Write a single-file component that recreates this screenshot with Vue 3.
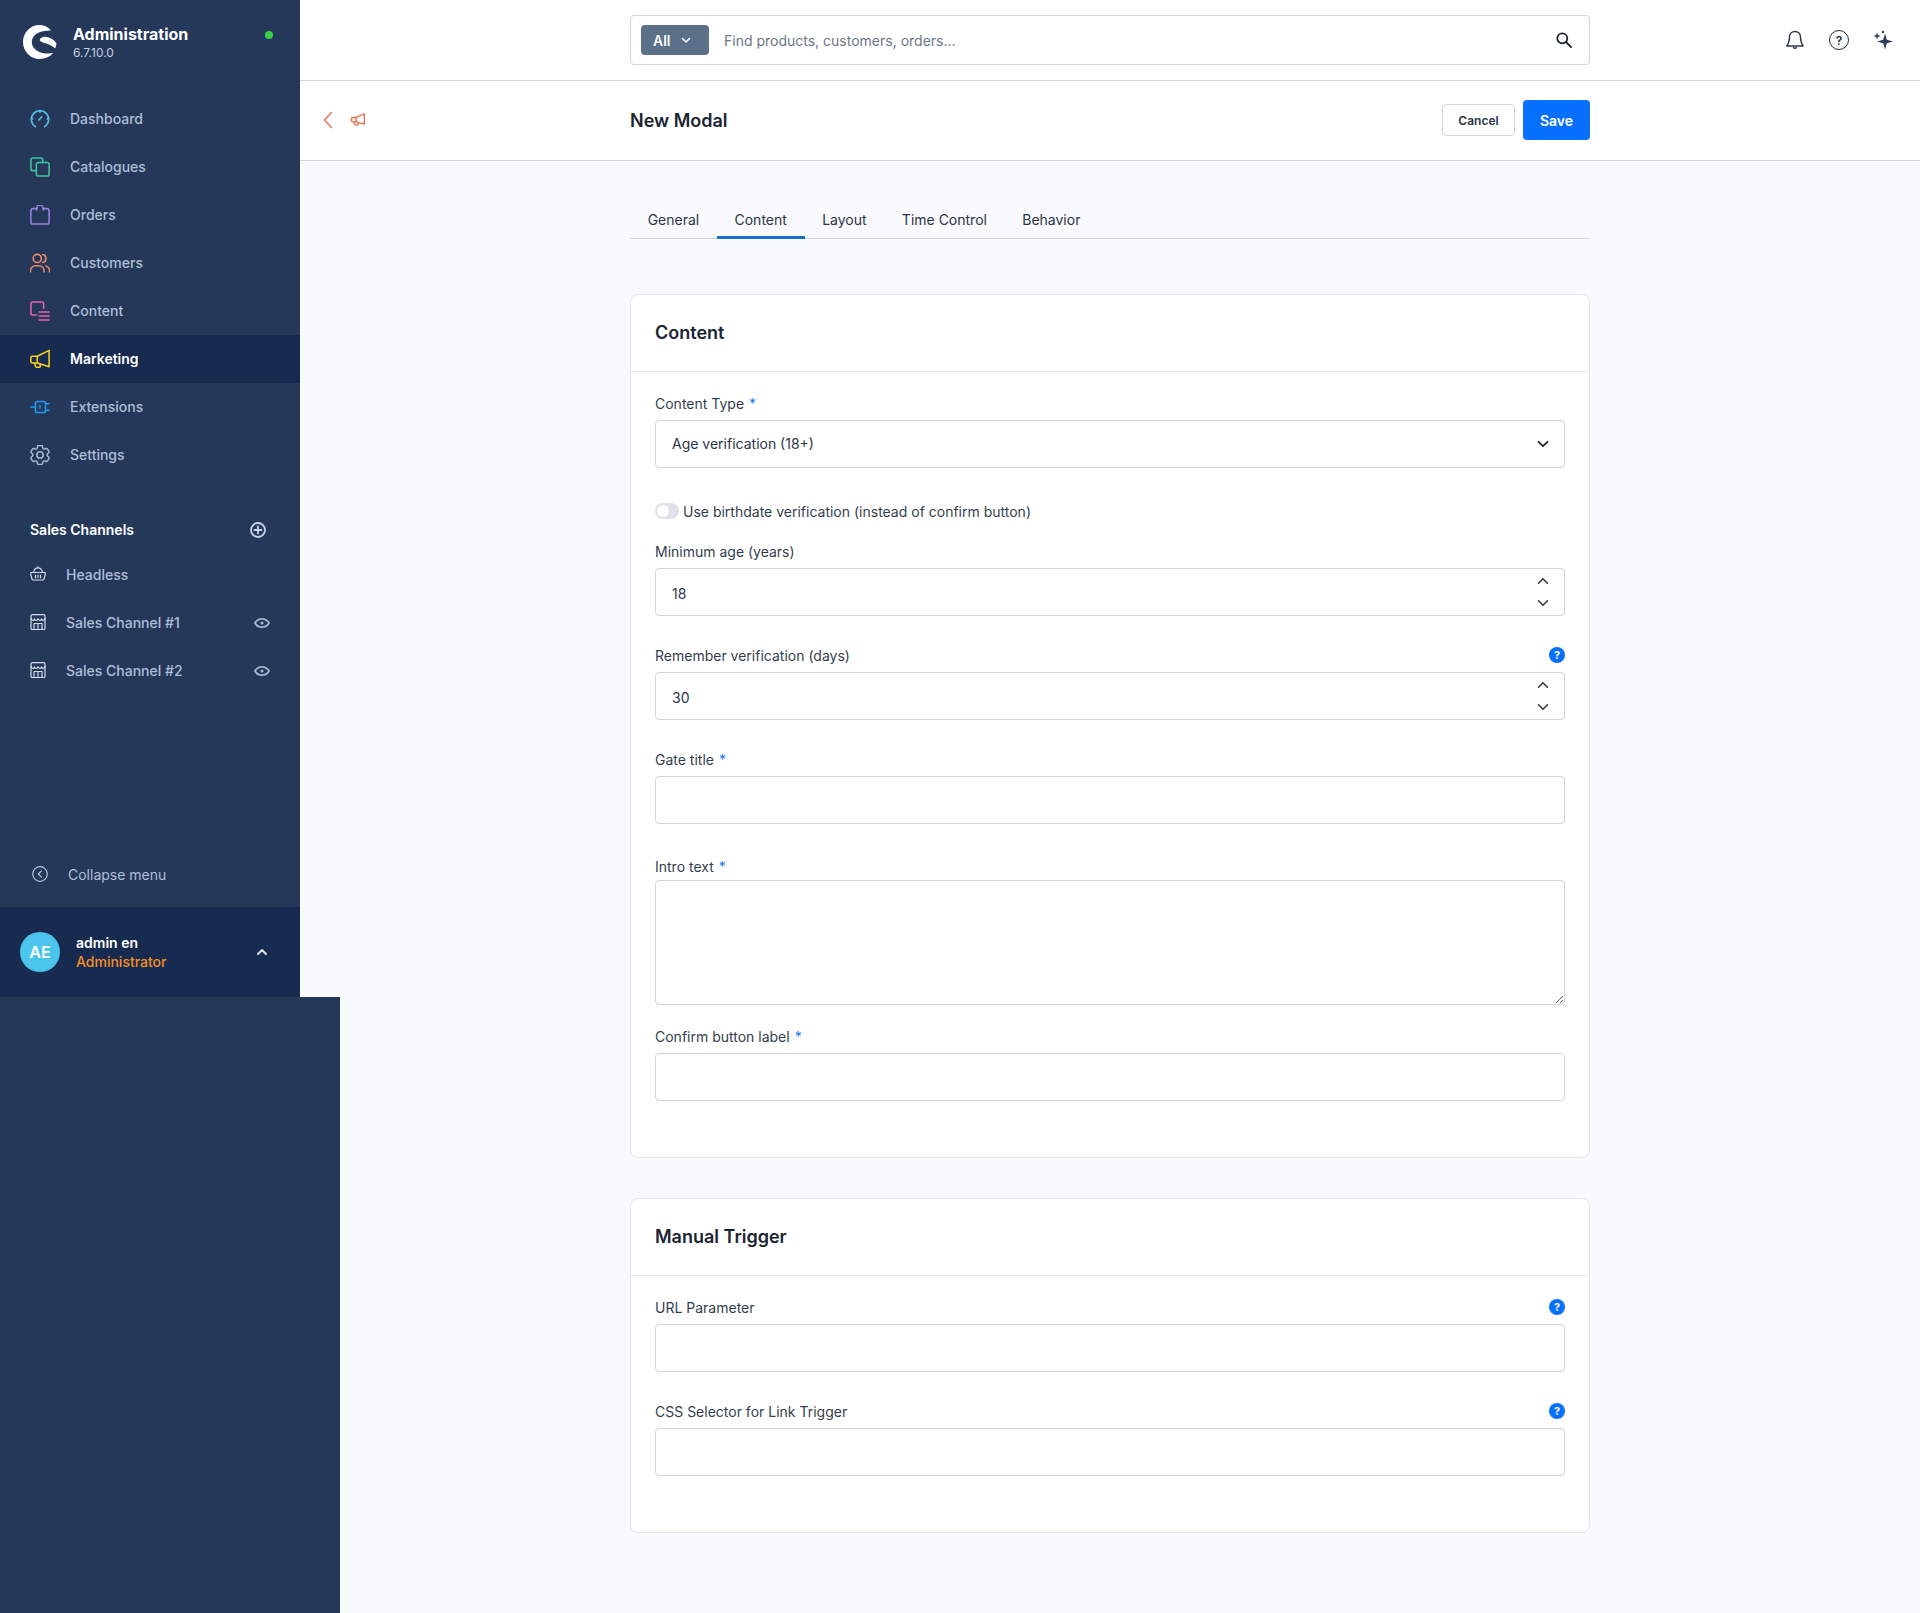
<script setup>
import { ref } from 'vue';

const tabs = ['General', 'Content', 'Layout', 'Time Control', 'Behavior'];
const activeTab = ref('Content');

const navItems = [
  { name: 'Dashboard', color: '#57c4e5', paths: ['M7 20.500A9.500 9.500 0 1 1 17 20.500', 'M2.500 12h1.500M20 12h1.500M12 2.500V4.500', 'M10.800 13.200l3.200-3.600'] },
  { name: 'Catalogues', color: '#3fc59b', paths: ['M8 16H4a2 2 0 0 1-2-2V4a2 2 0 0 1 2-2h9a2 2 0 0 1 2 2v3', 'M10 7h10a2 2 0 0 1 2 2v11a2 2 0 0 1-2 2H10a2 2 0 0 1-2-2V9a2 2 0 0 1 2-2z'] },
  { name: 'Orders', color: '#8e85de', paths: ['M8.500 5H4a2 2 0 0 0-2 2V20a2 2 0 0 0 2 2h16a2 2 0 0 0 2-2V7a2 2 0 0 0-2-2h-4.500', 'M8.500 6.500V4.500a3.500 3.500 0 0 1 7 0V6.500'] },
  { name: 'Customers', color: '#ec8a68', paths: ['M9 11.500a4.500 4.500 0 1 0 0-9 4.500 4.500 0 0 0 0 9z', 'M1.500 22v-1.500a5.500 5.500 0 0 1 5.500-5.500h4a5.500 5.500 0 0 1 5.500 5.500V22', 'M15 2.600a4.500 4.500 0 0 1 0 8.800', 'M18.500 15.300a5.500 5.500 0 0 1 4 5.200V22'] },
  { name: 'Content', color: '#e363ad', paths: ['M8 16.500H4a2 2 0 0 1-2-2V4a2 2 0 0 1 2-2h10a2 2 0 0 1 2 2v5', 'M11 13h11M11 17.500h11M11 22h11'] },
  { name: 'Marketing', color: '#f5d21f', active: true, paths: ['M22 2.500v18L9 16.500H3.500a1.500 1.500 0 0 1-1.500-1.500v-4.500a1.500 1.500 0 0 1 1.500-1.500H9z', 'M9 9v7.500', 'M6 16.500l1 3.500a1.500 1.500 0 0 0 1.500 1h2.500a1.500 1.500 0 0 0 1.400-1.800l-.4-1.500'] },
  { name: 'Extensions', color: '#1e9bf0', paths: ['M9 6h7a2 2 0 0 1 2 2v8a2 2 0 0 1-2 2H9a2 2 0 0 1-2-2V8a2 2 0 0 1 2-2z', 'M1 12h6M18 8.500h4M18 15.500h4', 'M12 10.500v3'] },
  { name: 'Settings', color: '#a6b6cd', gear: true, paths: [] },
];

const channels = [
  { name: 'Headless', icon: 'basket', eye: false },
  { name: 'Sales Channel #1', icon: 'store', eye: true },
  { name: 'Sales Channel #2', icon: 'store', eye: true },
];

const gearPath = 'M9.594 3.94c.09-.542.56-.94 1.11-.94h2.593c.55 0 1.02.398 1.11.94l.213 1.281c.063.374.313.686.645.87.074.04.147.083.22.127.324.196.72.257 1.075.124l1.217-.456a1.125 1.125 0 011.37.49l1.296 2.247a1.125 1.125 0 01-.26 1.431l-1.003.827c-.293.24-.438.613-.431.992a6.759 6.759 0 010 .255c-.007.378.138.75.43.99l1.005.828c.424.35.534.954.26 1.43l-1.298 2.247a1.125 1.125 0 01-1.369.491l-1.217-.456c-.355-.133-.75-.072-1.076.124a6.57 6.57 0 01-.22.128c-.331.183-.581.495-.644.869l-.213 1.28c-.09.543-.56.941-1.11.941h-2.594c-.55 0-1.02-.398-1.11-.94l-.213-1.281c-.062-.374-.312-.686-.644-.87a6.52 6.52 0 01-.22-.127c-.325-.196-.72-.257-1.076-.124l-1.217.456a1.125 1.125 0 01-1.369-.49l-1.297-2.247a1.125 1.125 0 01.26-1.431l1.004-.827c.292-.24.437-.613.43-.992a6.932 6.932 0 010-.255c.007-.378-.138-.75-.43-.99l-1.004-.828a1.125 1.125 0 01-.26-1.43l1.297-2.247a1.125 1.125 0 011.37-.491l1.216.456c.356.133.751.072 1.076-.124.072-.044.146-.087.22-.128.332-.183.582-.495.644-.869l.214-1.281z';
</script>

<template>
  <div class="app">
    <aside class="sidebar">
      <header class="brand">
        <svg class="logo" viewBox="0 0 34 34">
          <path fill="#fff" d="M28 5.200C24.800 1.800 20.800 0 16.500 0 7.300 0 0 7.600 0 17c0 9.500 7.500 17 16.800 17 5.400 0 10.500-2.300 13.300-5.900-3.500.500-8.800.7-13.200-.9C12 25.500 8.800 21.600 8.800 17.100c0-6 5.800-10.100 12.500-11 2.500-.3 4.700-.5 6.700-.9z" />
          <path fill="#fff" d="M17.600 13.200c-.9.800-1.100 2-.3 2.900 1.900 1.900 6.300 2.300 9.500 3.800 2.200 1 4.100 2.200 5.300 3.500.8-1.700 1.300-3.700 1.300-5.500-2.800-3.500-7.400-6-11.400-6.200-1.800 0-3.300.7-4.400 1.500z" />
        </svg>
        <div class="brand-text">
          <strong>Administration</strong>
          <span>6.7.10.0</span>
        </div>
        <i class="status-dot"></i>
      </header>

      <nav class="main-nav">
        <a v-for="item in navItems" :key="item.name" class="nav-item" :class="{ active: item.active }">
          <svg class="nav-icon" :viewBox="item.gear ? '2.500 2.500 19 19' : '1 1 22 22'" fill="none" :stroke="item.color" :stroke-width="item.gear ? 1.400 : 1.700" stroke-linecap="round" stroke-linejoin="round">
            <template v-if="item.gear">
              <path :d="gearPath" />
              <circle cx="12" cy="12" r="3" />
            </template>
            <path v-for="(d, i) in item.paths" :key="i" :d="d" />
          </svg>
          <span>{{ item.name }}</span>
        </a>
      </nav>

      <section class="channels">
        <div class="channels-head">
          <span>Sales Channels</span>
          <svg width="16" height="16" viewBox="0 0 16 16" fill="none" stroke="#c9d5e6" stroke-width="1.800" stroke-linecap="round">
            <circle cx="8" cy="8" r="7" />
            <path d="M8 4.500v7M4.500 8h7" />
          </svg>
        </div>
        <a v-for="channel in channels" :key="channel.name" class="channel">
          <svg v-if="channel.icon === 'basket'" class="channel-icon" viewBox="0 0 16 16" fill="none" stroke="#d3dde9" stroke-width="1.200" stroke-linejoin="round" stroke-linecap="round">
            <path d="M.8 6.500h14.400v1.500a6 6 0 0 1-.3 1.800l-.9 3.200a1.200 1.200 0 0 1-1.200 1H3.200a1.200 1.200 0 0 1-1.200-1l-.9-3.200A6 6 0 0 1 .8 8z" />
            <path d="M3.500 6.500C4 3.500 6 1.800 8 1.800s4 1.700 4.500 4.700M8 .8v1M5.500 9.200v2.500M8 9.200v2.500M10.500 9.200v2.500" />
          </svg>
          <svg v-else class="channel-icon" viewBox="0 0 16 16" fill="none" stroke="#d3dde9" stroke-width="1.200" stroke-linejoin="round" stroke-linecap="round">
            <path d="M2.500.7h11a1.500 1.500 0 0 1 1.500 1.500v12a1.500 1.500 0 0 1-1.500 1.500h-11A1.500 1.500 0 0 1 1 14.200v-12A1.500 1.500 0 0 1 2.500.7z" />
            <path d="M1 4.500c1 2.500 3 2.500 3.500.3.600 2.200 2.500 2.200 3.500 0 1 2.200 2.900 2.200 3.500 0C12 7 14 7 15 4.500" />
            <path d="M4 15.500V9.500h8v6M8 9.500v6" />
          </svg>
          <span>{{ channel.name }}</span>
          <svg v-if="channel.eye" class="eye" width="16" height="16" viewBox="0 0 16 16" fill="none" stroke="#a6b6cd" stroke-width="1.800">
            <path d="M1 8C2.600 5.200 5 3.800 8 3.800s5.400 1.400 7 4.200c-1.600 2.800-4 4.200-7 4.200S2.600 10.800 1 8z" />
            <circle cx="8" cy="8" r="1.600" fill="#a6b6cd" stroke="none" />
          </svg>
        </a>
      </section>

      <a class="collapse">
        <svg width="16" height="16" viewBox="0 0 16 16" fill="none" stroke="#b3c2d8" stroke-width="1.200" stroke-linecap="round" stroke-linejoin="round">
          <circle cx="8" cy="8" r="7.300" />
          <path d="M9.500 4.800L6.300 8l3.200 3.200" />
        </svg>
        <span>Collapse menu</span>
      </a>

      <footer class="user">
        <div class="avatar">AE</div>
        <div class="user-text">
          <strong>admin en</strong>
          <span>Administrator</span>
        </div>
        <svg width="12" height="12" viewBox="0 0 12 12" fill="none" stroke="#dfe6f0" stroke-width="2" stroke-linecap="round" stroke-linejoin="round">
          <path d="M2 8l4-4 4 4" />
        </svg>
      </footer>
    </aside>

    <div class="sidebar-rest"></div>

    <main class="main">
      <div class="topbar">
        <div class="search">
          <button class="search-type">
            All
            <svg width="10" height="10" viewBox="0 0 10 10" fill="none" stroke="#fff" stroke-width="1.600" stroke-linecap="round" stroke-linejoin="round">
              <path d="M1.500 3.500L5 7l3.500-3.500" />
            </svg>
          </button>
          <input type="text" placeholder="Find products, customers, orders..." />
          <svg width="16" height="16" viewBox="0 0 16 16" fill="none" stroke="#1a2432" stroke-width="1.800" stroke-linecap="round">
            <circle cx="6.300" cy="6.300" r="5" />
            <path d="M10 10l5 5" />
          </svg>
        </div>
        <div class="top-icons">
          <svg width="20" height="20" viewBox="0 0 20 20" fill="none" stroke="#303b4a" stroke-width="1.400" stroke-linejoin="round" stroke-linecap="round">
            <path d="M10 1.500c-3.200 0-5.500 2.400-5.500 5.500 0 4.500-.5 6.200-2.700 9h16.400c-2.200-2.800-2.700-4.500-2.700-9 0-3.100-2.300-5.500-5.500-5.500z" />
            <path d="M8.500 17.300a1.600 1.600 0 0 0 3 0" />
          </svg>
          <span class="help-round">?</span>
          <svg width="20" height="20" viewBox="0 0 20 20" fill="#2c3d58">
            <path d="M12 3.500l1.800 6.200 6.200 1.800-6.200 1.800-1.800 6.200-1.800-6.200-6.200-1.800 6.200-1.800z" />
            <path d="M4 2.500l.9 2.600 2.600.9-2.600.9L4 9.500l-.9-2.600L.5 6l2.600-.9z" />
            <circle cx="10" cy="2" r="1.200" />
          </svg>
        </div>
      </div>

      <div class="smartbar">
        <div class="crumbs">
          <svg width="10" height="18" viewBox="0 0 10 18" fill="none" stroke="#e96f4a" stroke-width="1.500" stroke-linecap="round" stroke-linejoin="round">
            <path d="M8.500 1.500L1.500 9l7 7.500" />
          </svg>
          <svg width="18" height="14" viewBox="0 0 24 22" fill="none" stroke="#e96f4a" stroke-width="2.200" stroke-linecap="round" stroke-linejoin="round">
            <path d="M22 1.500v16l-13-3.500H3.500A1.500 1.500 0 0 1 2 12.500v-4A1.500 1.500 0 0 1 3.500 7H9zM9 7v7M6 14l1 4a1.500 1.500 0 0 0 1.500 1h2.500a1.500 1.500 0 0 0 1.400-2l-.4-1.500" />
          </svg>
        </div>
        <div class="smartbar-inner">
          <h1>New Modal</h1>
          <div class="actions">
            <button class="btn-cancel">Cancel</button>
            <button class="btn-save">Save</button>
          </div>
        </div>
      </div>

      <div class="page">
        <div class="tabs">
          <a v-for="tab in tabs" :key="tab" class="tab" :class="{ active: tab === activeTab }" @click="activeTab = tab">{{ tab }}</a>
        </div>

        <section class="card first">
          <h2>Content</h2>
          <div class="card-body">
            <div class="field">
              <label>Content Type <em>*</em></label>
              <div class="control">
                <select>
                  <option>Age verification (18+)</option>
                </select>
                <svg class="select-arrow" width="12" height="12" viewBox="0 0 12 12" fill="none" stroke="#1e2a38" stroke-width="1.800" stroke-linecap="round" stroke-linejoin="round">
                  <path d="M1.500 3.800L6 8.200l4.500-4.400" />
                </svg>
              </div>
            </div>

            <div class="toggle-row">
              <span class="toggle"><i></i></span>
              <span>Use birthdate verification (instead of confirm button)</span>
            </div>

            <div class="field">
              <label>Minimum age (years)</label>
              <div class="control">
                <input type="number" value="18" />
                <div class="stepper">
                  <svg width="12" height="12" viewBox="0 0 12 12"><path d="M1.500 8.200L6 3.800l4.500 4.400" /></svg>
                  <svg width="12" height="12" viewBox="0 0 12 12"><path d="M1.500 3.800L6 8.200l4.500-4.400" /></svg>
                </div>
              </div>
            </div>

            <div class="field">
              <label>Remember verification (days) <b class="help">?</b></label>
              <div class="control">
                <input type="number" value="30" />
                <div class="stepper">
                  <svg width="12" height="12" viewBox="0 0 12 12"><path d="M1.500 8.200L6 3.800l4.500 4.400" /></svg>
                  <svg width="12" height="12" viewBox="0 0 12 12"><path d="M1.500 3.800L6 8.200l4.500-4.400" /></svg>
                </div>
              </div>
            </div>

            <div class="field before-text">
              <label>Gate title <em>*</em></label>
              <input type="text" />
            </div>

            <div class="field text-field">
              <label>Intro text <em>*</em></label>
              <textarea></textarea>
            </div>

            <div class="field">
              <label>Confirm button label <em>*</em></label>
              <input type="text" />
            </div>
          </div>
        </section>

        <section class="card">
          <h2>Manual Trigger</h2>
          <div class="card-body">
            <div class="field">
              <label>URL Parameter <b class="help">?</b></label>
              <input type="text" />
            </div>
            <div class="field">
              <label>CSS Selector for Link Trigger <b class="help">?</b></label>
              <input type="text" />
            </div>
          </div>
        </section>
      </div>
    </main>
  </div>
</template>

<style>
body {
  margin: 0;
  background: #f9fafe;
}
</style>

<style scoped>
.app {
  display: grid;
  grid-template-columns: 300px 40px 1fr;
  grid-template-rows: 997px 616px;
  font-family: Inter, "Liberation Sans", sans-serif;
  font-size: 14px;
  color: #2b3545;
}

/* sidebar */
.sidebar {
  grid-column: 1;
  grid-row: 1;
  display: flex;
  flex-direction: column;
  background: #25385a;
  color: #aebfd8;
}
.sidebar-rest {
  grid-column: 1 / 3;
  grid-row: 2;
  background: #25385a;
  z-index: 1;
}
.brand {
  display: flex;
  align-items: center;
  height: 95px;
  padding: 0 27px 9px 23px;
  box-sizing: border-box;
}
.logo {
  width: 34px;
  height: 34px;
  margin: 0 16px 2px 0;
}
.brand-text {
  display: flex;
  flex-direction: column;
  flex: 1;
}
.brand-text strong {
  font-size: 16px;
  font-weight: 700;
  line-height: 20px;
  color: #fff;
}
.brand-text span {
  font-size: 12px;
  line-height: 18px;
  color: #c3d0e2;
}
.status-dot {
  width: 8px;
  height: 8px;
  border-radius: 50%;
  background: #37d046;
  margin-bottom: 17px;
}
.nav-item {
  display: flex;
  align-items: center;
  height: 48px;
  box-sizing: border-box;
  padding: 0 0 1px 30px;
  font-weight: 500;
}
.nav-item.active {
  background: #172a4f;
  color: #fff;
  font-weight: 600;
}
.nav-icon {
  width: 20px;
  height: 20px;
  margin-right: 20px;
}
.channels {
  margin-top: 26px;
  flex: 1;
}
.channels-head {
  display: flex;
  align-items: center;
  justify-content: space-between;
  height: 48px;
  padding: 0 34px 0 30px;
  font-weight: 600;
  color: #fff;
  margin-bottom: -3px;
}
.channels-head svg {
  margin-top: 2px;
}
.channel {
  display: flex;
  align-items: center;
  height: 48px;
  padding-left: 30px;
  font-weight: 500;
}
.channel span {
  flex: 1;
}
.channel-icon {
  width: 16px;
  height: 16px;
  margin-right: 20px;
}
.eye {
  margin: 2px 30px 0 0;
}
.collapse {
  display: flex;
  align-items: center;
  height: 48px;
  padding-left: 32px;
  margin-bottom: 9px;
  color: #aebfd8;
}
.collapse svg {
  margin-right: 20px;
}
.user {
  display: flex;
  align-items: center;
  height: 90px;
  padding: 0 32px 0 20px;
  background: #172a4f;
}
.avatar {
  width: 40px;
  height: 40px;
  border-radius: 50%;
  background: #4ac6ec;
  color: #fff;
  font-weight: 600;
  font-size: 16px;
  display: flex;
  align-items: center;
  justify-content: center;
  margin-right: 16px;
}
.user-text {
  flex: 1;
  display: flex;
  flex-direction: column;
  line-height: 19px;
}
.user-text strong {
  font-weight: 600;
  color: #fff;
}
.user-text span {
  font-weight: 500;
  color: #f88e24;
}

/* main column */
.main {
  grid-column: 2 / 4;
  grid-row: 1 / 3;
  display: flex;
  flex-direction: column;
  background: #f9fafe;
  min-width: 0;
}
.topbar,
.smartbar {
  position: relative;
  display: flex;
  align-items: center;
  background: #fff;
  border-bottom: 1px solid #d1d5dc;
  box-sizing: border-box;
  padding-left: 330px;
}
.topbar {
  height: 81px;
}
.smartbar {
  height: 80px;
  padding-bottom: 1px;
}
.search {
  display: flex;
  align-items: center;
  width: 960px;
  height: 50px;
  box-sizing: border-box;
  border: 1px solid #d1d5dc;
  border-radius: 4px;
  padding: 0 17px 0 10px;
}
.search-type {
  display: flex;
  align-items: center;
  gap: 10px;
  width: 68px;
  height: 30px;
  padding: 0 0 0 12px;
  border: 0;
  border-radius: 4px;
  background: #5b7089;
  color: #fff;
  font: 600 14px Inter, sans-serif;
}
.search input {
  flex: 1;
  border: 0;
  outline: 0;
  background: none;
  margin-left: 13px;
  padding-bottom: 1px;
  font: 400 14px Inter, sans-serif;
  color: #2b3545;
}
.search input::placeholder {
  color: #6c7888;
}
.top-icons {
  display: flex;
  align-items: center;
  gap: 24px;
  margin-left: 195px;
}
.help-round {
  width: 20px;
  height: 20px;
  box-sizing: border-box;
  border: 1.500px solid #1e2a38;
  border-radius: 50%;
  display: flex;
  align-items: center;
  justify-content: center;
  font-size: 12px;
  font-weight: 600;
  color: #1e2a38;
}
.crumbs {
  position: absolute;
  left: 23px;
  top: 30px;
  display: flex;
  align-items: center;
  gap: 16px;
}
.smartbar-inner {
  width: 960px;
  display: flex;
  align-items: center;
  justify-content: space-between;
}
h1 {
  margin: 0;
  font-size: 18px;
  font-weight: 600;
  color: #1a2432;
}
.actions {
  display: flex;
  align-items: center;
  gap: 8px;
}
.btn-cancel {
  width: 73px;
  height: 32px;
  border: 1px solid #d1d5dc;
  border-radius: 4px;
  background: #fff;
  color: #2b3545;
  font: 600 12px Inter, sans-serif;
}
.btn-save {
  width: 67px;
  height: 40px;
  border: 0;
  border-radius: 4px;
  background: #0870ff;
  color: #fff;
  font: 600 14px Inter, sans-serif;
}

/* page */
.page {
  width: 960px;
  margin-left: 330px;
  padding-top: 44px;
}
.tabs {
  display: flex;
  height: 33px;
  border-bottom: 1px solid #d1d5dc;
  margin-bottom: 55px;
}
.tab {
  padding: 0 17.650px;
  line-height: 30px;
  height: 34px;
  box-sizing: border-box;
}
.tab.active {
  border-bottom: 3px solid #1a6fd1;
}
.card {
  background: #fff;
  border: 1px solid #e3e6eb;
  border-radius: 8px;
  margin-bottom: 40px;
}
h2 {
  margin: 0;
  height: 76px;
  line-height: 76px;
  padding: 0 24px;
  border-bottom: 1px solid #e3e6eb;
  font-size: 18px;
  font-weight: 600;
  color: #1a2432;
}
.card-body {
  padding: 21px 24px 56px;
}
.field {
  margin-bottom: 29px;
}
.field.before-text {
  margin-bottom: 32px;
}
.field.text-field {
  margin-bottom: 21px;
}
.field.text-field label {
  margin-bottom: 4px;
}
.field:last-child {
  margin-bottom: 0;
}
label {
  display: flex;
  align-items: center;
  gap: 5px;
  height: 20px;
  margin-bottom: 7px;
  color: #343f4e;
}
em {
  font-style: normal;
  color: #1a7af8;
}
.help {
  margin-left: auto;
  width: 16px;
  height: 16px;
  border-radius: 50%;
  background: #0870ff;
  color: #fff;
  font-size: 11px;
  font-weight: 700;
  display: flex;
  align-items: center;
  justify-content: center;
}
.control {
  position: relative;
}
input,
select,
textarea {
  display: block;
  width: 100%;
  box-sizing: border-box;
  border: 1px solid #d1d5dc;
  border-radius: 4px;
  background: #fff;
  font: 400 14px Inter, sans-serif;
  color: #2b3545;
}
.field input,
.field select {
  height: 48px;
  padding: 0 16px;
  appearance: none;
}
.field input {
  padding-top: 2px;
}
.field select {
  padding-bottom: 2px;
}
.field input::-webkit-outer-spin-button,
.field input::-webkit-inner-spin-button {
  appearance: none;
  margin: 0;
}
textarea {
  height: 125px;
  resize: vertical;
}
.select-arrow {
  position: absolute;
  right: 16px;
  top: 18px;
}
.stepper {
  position: absolute;
  right: 16px;
  top: 0;
  bottom: 0;
  display: flex;
  flex-direction: column;
  justify-content: center;
  gap: 10px;
}
.stepper svg {
  display: block;
  fill: none;
  stroke: #2b3545;
  stroke-width: 1.500;
  stroke-linecap: round;
  stroke-linejoin: round;
}
.toggle-row {
  display: flex;
  align-items: center;
  gap: 4px;
  height: 20px;
  margin: 33px 0 20px;
  color: #343f4e;
}
.toggle {
  display: flex;
  align-items: center;
  width: 24px;
  height: 16px;
  border-radius: 8px;
  background: #dfe2e7;
  padding-left: 2px;
  box-sizing: border-box;
}
.toggle i {
  width: 12px;
  height: 12px;
  border-radius: 50%;
  background: #fff;
}
</style>
